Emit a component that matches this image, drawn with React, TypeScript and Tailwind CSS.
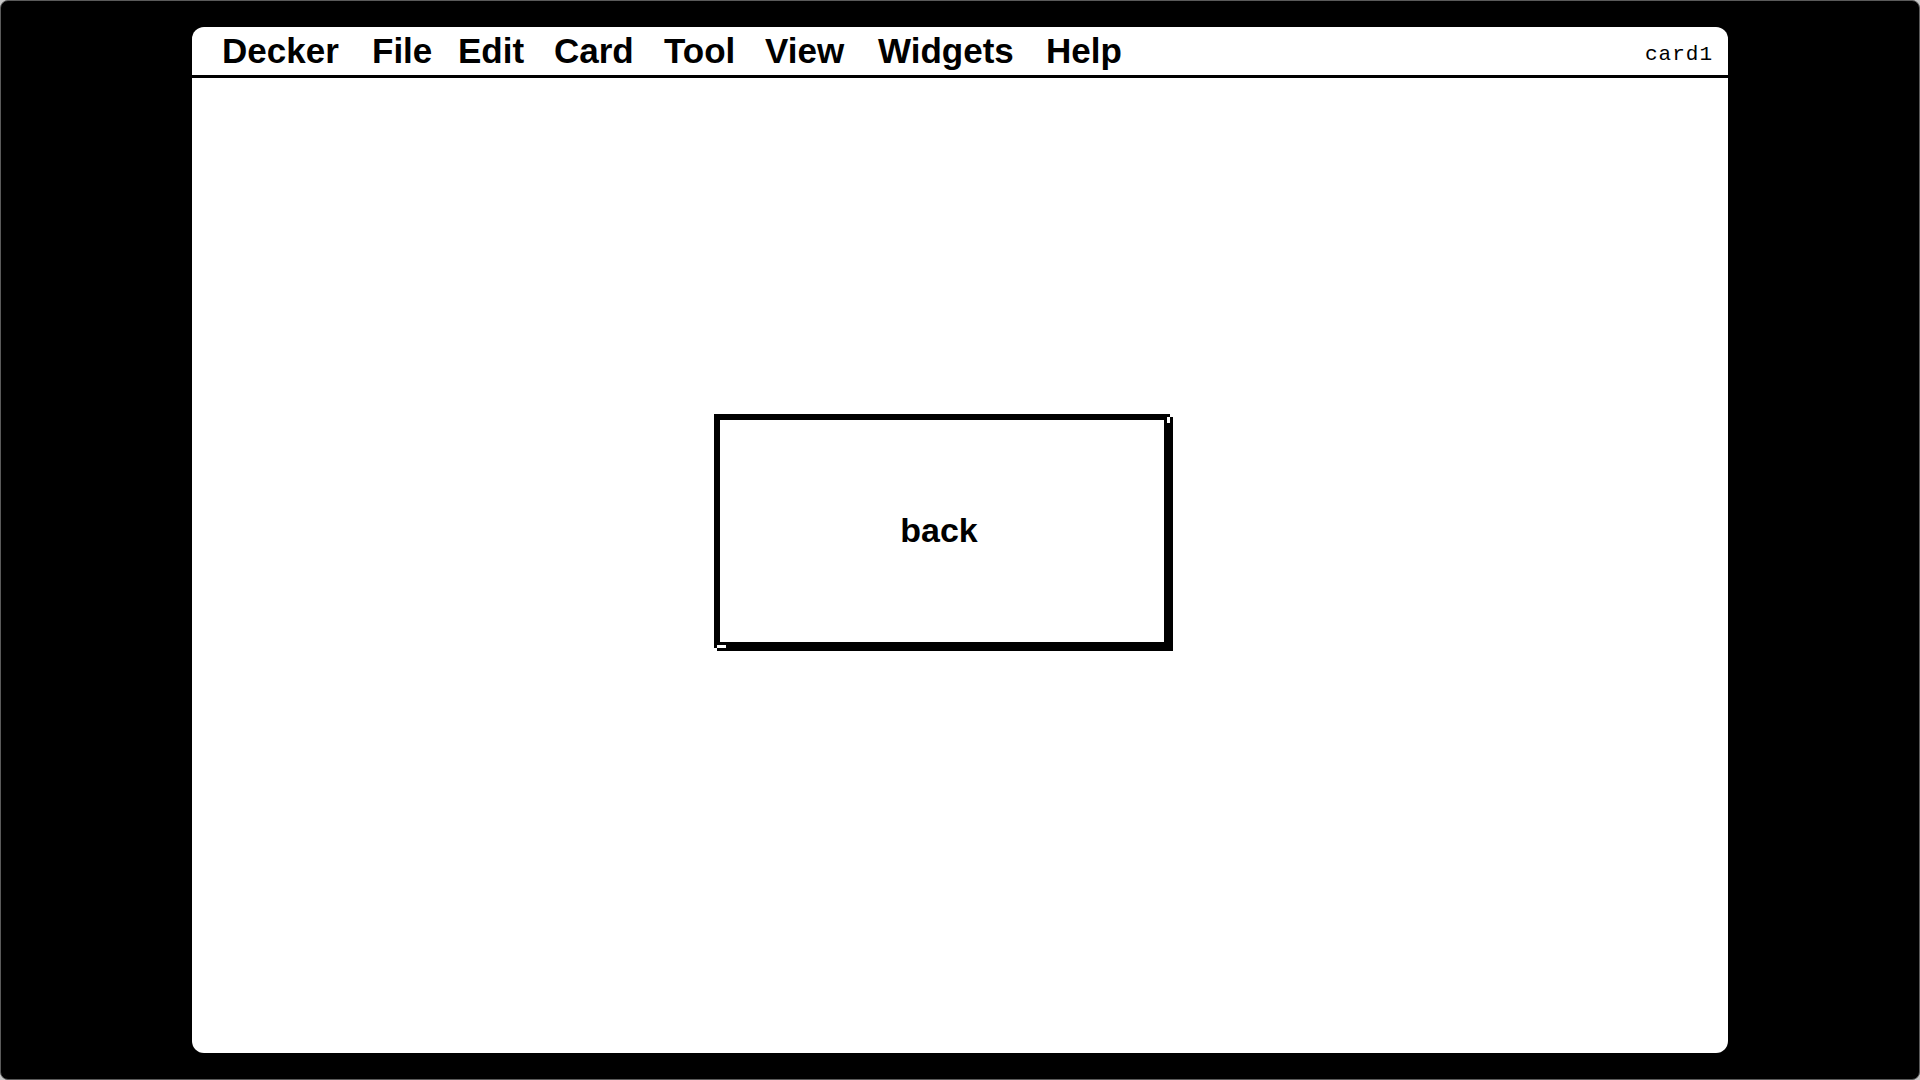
import React from "react";

const items: { label: string; w: string }[] = [
  { label: "Decker", w: "w-[150px]" },
  { label: "File", w: "w-[86px]" },
  { label: "Edit", w: "w-[96px]" },
  { label: "Card", w: "w-[110px]" },
  { label: "Tool", w: "w-[101px]" },
  { label: "View", w: "w-[113px]" },
  { label: "Widgets", w: "w-[168px]" },
  { label: "Help", w: "w-[80px]" },
];

export default function App() {
  return (
    <div className="w-[1920px] h-[1080px] bg-[#c8c8c8] overflow-hidden">
      <div className="w-full h-full bg-black border border-[#5a5a5a] rounded-[8px] pt-[26px] pl-[191px]">
        <div className="w-[1536px] h-[1026px] bg-white rounded-[12px] flex flex-col overflow-hidden">
          <div className="h-[48px] flex items-start justify-between pt-[6px] pl-[30px] pr-[15px]">
            <div className="flex">
              {items.map((it) => (
                <div
                  key={it.label}
                  className={`${it.w} text-[35px] leading-none font-bold text-black`}
                  style={{ fontFamily: '"Liberation Sans", Arial, sans-serif' }}
                >
                  {it.label}
                </div>
              ))}
            </div>
            <div
              className="text-[21px] leading-none text-black tracking-[1px] mt-[11px]"
              style={{ fontFamily: '"Liberation Mono", "Courier New", monospace' }}
            >
              card1
            </div>
          </div>
          <div className="h-[3px] bg-black" />
          <div className="flex-1">
            <div className="ml-[522px] mt-[336px] w-[459px] h-[237px] relative">
              <div className="w-[456px] h-[234px] border-[6px] border-black bg-white shadow-[3px_3px_0_0_#000] flex items-center justify-center">
                <span
                  className="text-[34px] leading-none font-bold text-black -ml-[6px] -mt-[2px]"
                  style={{ fontFamily: '"Liberation Sans", Arial, sans-serif' }}
                >
                  back
                </span>
              </div>
              <div className="absolute left-[453px] top-[3px] w-[3px] h-[6px] bg-white" />
              <div className="absolute left-[3px] top-[231px] w-[9px] h-[3px] bg-white" />
            </div>
          </div>
        </div>
      </div>
    </div>
  );
}
